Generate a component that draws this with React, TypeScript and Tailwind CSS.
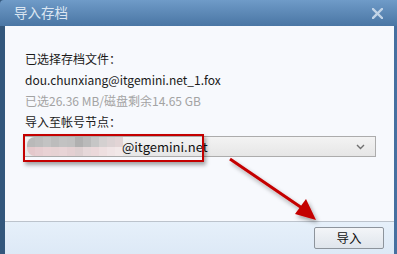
import React from "react";

const font = { fontFamily: '"Microsoft YaHei","Noto Sans CJK SC","Noto Sans",sans-serif' };

const mosaicTop = ["#b9b9b9", "#bdbdbd", "#c3c3c3", "#bcbcbc", "#c2c2c2", "#c0c0c0", "#b0b0b0", "#bababa", "#c6c6c6", "#d4d0d0", "#dcd2d3", "#e2d4d5"];
const mosaicBot = ["#e4c8cb", "#e6cdd0", "#e9d2d4", "#e6d2d3", "#e8d4d6", "#e4d0d2", "#ddcfd0", "#e6d8d9", "#ebd8da", "#eedfe0", "#f0e4e5", "#f2e8e8"];

export default function App() {
  return (
    <div className="relative w-[397px] h-[254px] overflow-hidden bg-[#35597e] flex flex-col" style={font}>
      {/* title bar */}
      <div className="h-[26px] shrink-0 flex items-center justify-between pl-[14px] pr-[14px] bg-gradient-to-b from-[#6f9bc8] to-[#4a76a4] rounded-tl-[4px]">
        <span className="text-[13.5px] leading-none text-[#dbe6f2]">导入存档</span>
        <svg width="11" height="11" viewBox="0 0 11 11">
          <path d="M1 1 L10 10 M10 1 L1 10" stroke="#c2d4e7" strokeWidth="2.4" strokeLinecap="square" />
        </svg>
      </div>
      {/* body */}
      <div className="flex-1 flex pl-[5px] pr-[4px] bg-gradient-to-r from-[#33577c] via-[#33577c] to-[#4670a0]">
        <div className="flex-1 flex flex-col bg-[#f7f9fd]">
          <div className="h-[195px] shrink-0 pl-[20px] pr-[18px] pt-[22px] text-[12px] text-[#1a1a1a]">
            <div className="h-[21px] leading-[21px]">已选择存档文件：</div>
            <div className="h-[21px] leading-[21px]">dou.chunxiang@itgemini.net_1.fox</div>
            <div className="h-[21px] leading-[21px] text-[#a3a3a3]">已选26.36 MB/磁盘剩余14.65 GB</div>
            <div className="h-[21px] leading-[21px]">导入至帐号节点：</div>
            <div className="mt-[4px] h-[21px] w-[352px] -ml-[1px] border border-[#acacac] bg-gradient-to-b from-[#f3f3f3] to-[#e6e6e6] flex items-center justify-between pr-[10px]">
              <div className="flex items-center">
                <div className="ml-[2px] flex flex-col overflow-hidden rounded-l-[8px]">
                  <div className="flex">
                    {mosaicTop.map((c, i) => (
                      <div key={i} className="w-[8px] h-[10px]" style={{ background: c }} />
                    ))}
                  </div>
                  <div className="flex">
                    {mosaicBot.map((c, i) => (
                      <div key={i} className="w-[8px] h-[9px]" style={{ background: c }} />
                    ))}
                  </div>
                </div>
                <span className="text-[13px] text-[#111] leading-none -ml-[1px]">@itgemini.net</span>
              </div>
              <svg width="9" height="6" viewBox="0 0 9 6">
                <path d="M1 1 L4.5 4.5 L8 1" stroke="#707070" strokeWidth="1.4" fill="none" />
              </svg>
            </div>
          </div>
          <div className="flex-1 border-t border-[#bcc3cc] bg-gradient-to-b from-[#e6f0fa] to-[#dde9f6] flex justify-end items-start pt-[5px] pr-[10px]">
            <button className="w-[70px] h-[22px] border border-[#8d949c] rounded-[2px] bg-gradient-to-b from-[#f3f5f8] to-[#dfe5ec] text-[12.5px] text-[#111] leading-none flex items-center justify-center" style={font}>
              导入
            </button>
          </div>
        </div>
      </div>
      {/* red highlight box */}
      <div className="absolute left-[23px] top-[134px] w-[181px] h-[28px] border-2 border-[#c40000] shadow-[2px_3px_4px_rgba(0,0,0,0.35)]" />
      {/* arrow */}
      <svg className="absolute left-0 top-0 pointer-events-none" width="397" height="254" viewBox="0 0 397 254">
        <defs>
          <filter id="sh" x="-20%" y="-20%" width="140%" height="140%">
            <feDropShadow dx="2" dy="3" stdDeviation="2" floodColor="#000" floodOpacity="0.35" />
          </filter>
        </defs>
        <g filter="url(#sh)">
          <path d="M230 159 L302 208" stroke="#c40000" strokeWidth="3" />
          <path d="M316 220 L295 214 L306 199 Z" fill="#c40000" />
        </g>
      </svg>
    </div>
  );
}
